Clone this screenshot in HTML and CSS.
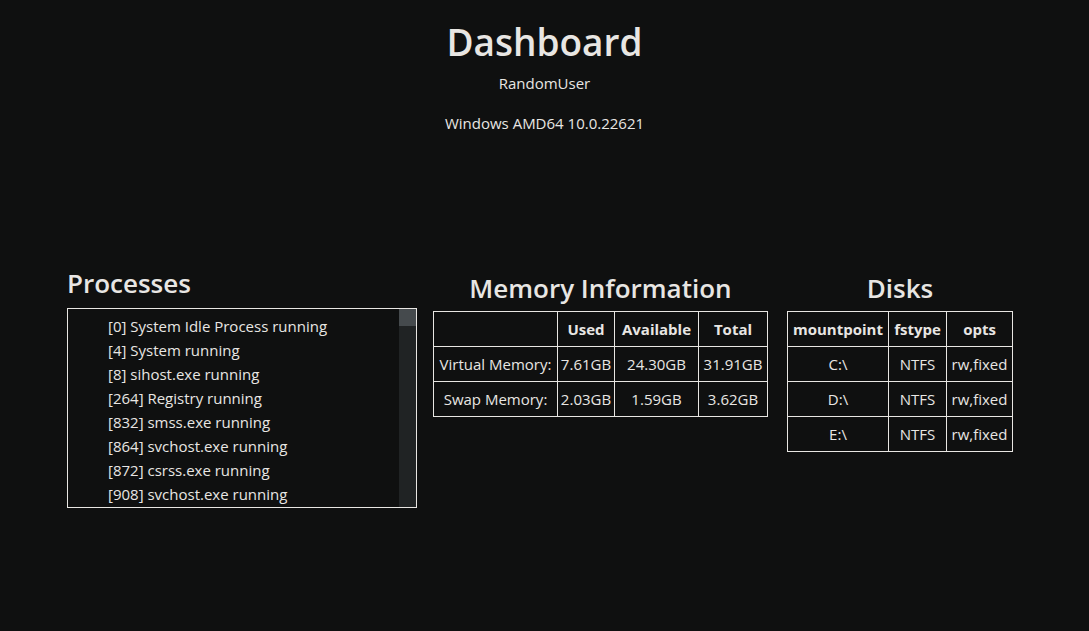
FILE: index.html
```html
<!DOCTYPE html>
<html lang="en">
<head>
<meta charset="utf-8">
<title>Dashboard</title>
<link rel="stylesheet" href="styles.css">
</head>
<body>
<header class="header">
  <h1 class="title">Dashboard</h1>
  <p class="user">RandomUser</p>
  <p class="os">Windows AMD64 10.0.22621</p>
</header>
<main class="panels">
  <section class="panel processes">
    <h2 class="panel-title proc-title">Processes</h2>
    <div class="proc-box">
      <ul class="proc-list">
        <li>[0] System Idle Process running</li>
        <li>[4] System running</li>
        <li>[8] sihost.exe running</li>
        <li>[264] Registry running</li>
        <li>[832] smss.exe running</li>
        <li>[864] svchost.exe running</li>
        <li>[872] csrss.exe running</li>
        <li>[908] svchost.exe running</li>
      </ul>
      <div class="scrollbar"><div class="scroll-thumb"></div></div>
    </div>
  </section>
  <section class="panel memory">
    <h2 class="panel-title">Memory Information</h2>
    <table class="grid mem-table">
      <colgroup>
        <col class="mc1"><col class="mc2"><col class="mc3"><col class="mc4">
      </colgroup>
      <thead>
        <tr><th></th><th>Used</th><th>Available</th><th>Total</th></tr>
      </thead>
      <tbody>
        <tr><td>Virtual Memory:</td><td>7.61GB</td><td>24.30GB</td><td>31.91GB</td></tr>
        <tr><td>Swap Memory:</td><td>2.03GB</td><td>1.59GB</td><td>3.62GB</td></tr>
      </tbody>
    </table>
  </section>
  <section class="panel disks">
    <h2 class="panel-title">Disks</h2>
    <table class="grid disk-table">
      <colgroup>
        <col class="dc1"><col class="dc2"><col class="dc3">
      </colgroup>
      <thead>
        <tr><th>mountpoint</th><th>fstype</th><th>opts</th></tr>
      </thead>
      <tbody>
        <tr><td>C:\</td><td>NTFS</td><td>rw,fixed</td></tr>
        <tr><td>D:\</td><td>NTFS</td><td>rw,fixed</td></tr>
        <tr><td>E:\</td><td>NTFS</td><td>rw,fixed</td></tr>
      </tbody>
    </table>
  </section>
</main>
</body>
</html>
```

FILE: styles.css
```css
html {
  background: #0f1010;
}
body {
  margin: 8px;
  background: #0f1010;
  color: #e8e6e3;
  font-family: "Open Sans", "Noto Sans", sans-serif;
  font-size: 15px;
}
.header {
  text-align: center;
}
.title {
  margin: 13px 0 0;
  font-size: 37px;
  font-weight: 600;
  line-height: 42px;
}
.user {
  margin: 9px 0 0;
  line-height: 22px;
}
.os {
  margin: 18px 0 0;
  line-height: 22px;
}
.panels {
  display: flex;
  align-items: flex-start;
  margin-top: 134px;
  padding-left: 59px;
}
.panel {
  display: flex;
  flex-direction: column;
  align-items: center;
}
.processes {
  align-items: flex-start;
  width: 350px;
}
.memory {
  margin-left: 16px;
  margin-top: 5px;
}
.disks {
  margin-left: 19px;
  margin-top: 5px;
}
.panel-title {
  margin: 0 0 8px;
  font-size: 26px;
  font-weight: 600;
  line-height: 30px;
}
.proc-title {
  margin-bottom: 10px;
}
.proc-box {
  position: relative;
  box-sizing: border-box;
  width: 350px;
  height: 200px;
  border: 1px solid #e8e6e3;
  overflow: hidden;
}
.proc-list {
  margin: 0;
  padding: 5px 17px 0 40px;
  list-style: none;
}
.proc-list li {
  line-height: 24px;
  white-space: nowrap;
}
.scrollbar {
  position: absolute;
  top: 0;
  right: 0;
  bottom: 0;
  width: 17px;
  background: #202324;
}
.scroll-thumb {
  height: 17px;
  background: #454a4d;
}
.grid {
  border-collapse: collapse;
  table-layout: fixed;
}
.grid th,
.grid td {
  border: 1px solid #e8e6e3;
  padding: 6px 0;
  line-height: 22px;
  text-align: center;
  white-space: nowrap;
}
.grid th {
  font-weight: 700;
}
.mc1 { width: 124px; }
.mc2 { width: 57px; }
.mc3 { width: 84px; }
.mc4 { width: 69px; }
.dc1 { width: 101px; }
.dc2 { width: 58px; }
.dc3 { width: 66px; }
```
